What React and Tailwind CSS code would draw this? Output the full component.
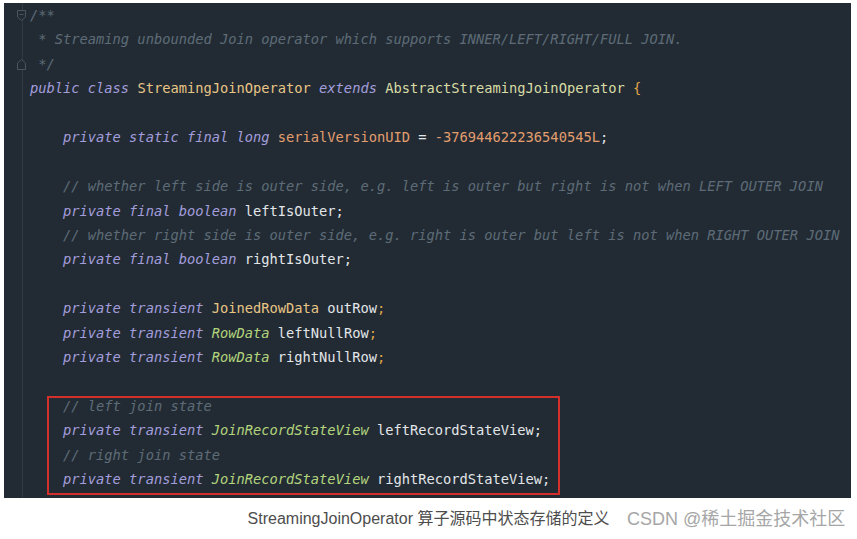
import React from "react";

const KW = "italic text-[#a39ddb]";
const CM = "italic text-[#5e6b77]";
const ID = "text-[#e2e6e9]";
const CLS = "text-[#e8c585]";
const SUP = "text-[#d8dca4]";
const TYP = "italic text-[#b3d47c]";
const FLD = "text-[#e39e6e]";
const PUN = "text-[#e0a548]";

const lines = [
  [["/**", CM]],
  [[" * Streaming unbounded Join operator which supports INNER/LEFT/RIGHT/FULL JOIN.", CM]],
  [[" */", CM]],
  [
    ["public class", KW],
    [" StreamingJoinOperator ", CLS],
    ["extends", KW],
    [" AbstractStreamingJoinOperator ", SUP],
    ["{", PUN],
  ],
  [],
  [
    ["    private static final long", KW],
    [" serialVersionUID ", FLD],
    ["= ", ID],
    ["-376944622236540545L", FLD],
    [";", ID],
  ],
  [],
  [["    // whether left side is outer side, e.g. left is outer but right is not when LEFT OUTER JOIN", CM]],
  [["    private final boolean", KW], [" leftIsOuter;", ID]],
  [["    // whether right side is outer side, e.g. right is outer but left is not when RIGHT OUTER JOIN", CM]],
  [["    private final boolean", KW], [" rightIsOuter;", ID]],
  [],
  [["    private transient", KW], [" JoinedRowData", CLS], [" outRow", ID], [";", PUN]],
  [["    private transient ", KW], ["RowData", TYP], [" leftNullRow", ID], [";", PUN]],
  [["    private transient ", KW], ["RowData", TYP], [" rightNullRow", ID], [";", PUN]],
  [],
  [["    // left join state", CM]],
  [["    private transient ", KW], ["JoinRecordStateView", TYP], [" leftRecordStateView;", ID]],
  [["    // right join state", CM]],
  [["    private transient ", KW], ["JoinRecordStateView", TYP], [" rightRecordStateView;", ID]],
];

const FoldMark = ({ up }) => (
  <svg width="9" height="11" viewBox="0 0 9 11" className="block">
    {up ? (
      <path d="M0.5 10.5 V4 L4.5 0.5 L8.5 4 V10.5 Z" fill="#222b34" stroke="#4a5560" />
    ) : (
      <path d="M0.5 0.5 H8.5 V7 L4.5 10.5 L0.5 7 Z M2.5 4.5 H6.5" fill="#222b34" stroke="#4a5560" />
    )}
  </svg>
);

export default function App() {
  return (
    <div className="flex h-[539px] w-[857px] flex-col overflow-hidden bg-white">
      {/* Code panel */}
      <div className="relative ml-[4px] mt-[3px] flex h-[495px] w-[847px] overflow-hidden bg-[#222b34]">
        {/* Gutter with fold markers */}
        <div className="relative w-[19px] shrink-0 border-r border-[#2f3a44]">
          <div className="flex flex-col gap-[38px] pl-[13px] pt-[7px]">
            <FoldMark />
            <FoldMark up />
          </div>
        </div>
        <div
          className="flex flex-col pl-[7px] text-[13.72px] leading-[24.45px] whitespace-pre"
          style={{ fontFamily: '"DejaVu Sans Mono", "Liberation Mono", monospace' }}
        >
          {lines.map((tokens, i) => (
            <div key={i} className="h-[24.45px]">
              {tokens.map(([text, cls], j) => (
                <span key={j} className={cls}>
                  {text}
                </span>
              ))}
            </div>
          ))}
        </div>
        {/* Highlight box */}
        <div className="absolute left-[43px] top-[393px] h-[99px] w-[513px] border-2 border-[#d3302b]" />
      </div>

      {/* Caption row */}
      <div
        className="relative flex h-[41px] items-center justify-center text-[16px]"
        style={{ fontFamily: '"Liberation Sans", "Noto Sans CJK SC", sans-serif' }}
      >
        <span className="text-[#4d4d4d]">StreamingJoinOperator 算子源码中状态存储的定义</span>
        <span className="absolute left-[627px] top-[9px] whitespace-nowrap text-[18px] leading-[24px] text-[#a6a6a6]">
          CSDN @稀土掘金技术社区
        </span>
      </div>
    </div>
  );
}
